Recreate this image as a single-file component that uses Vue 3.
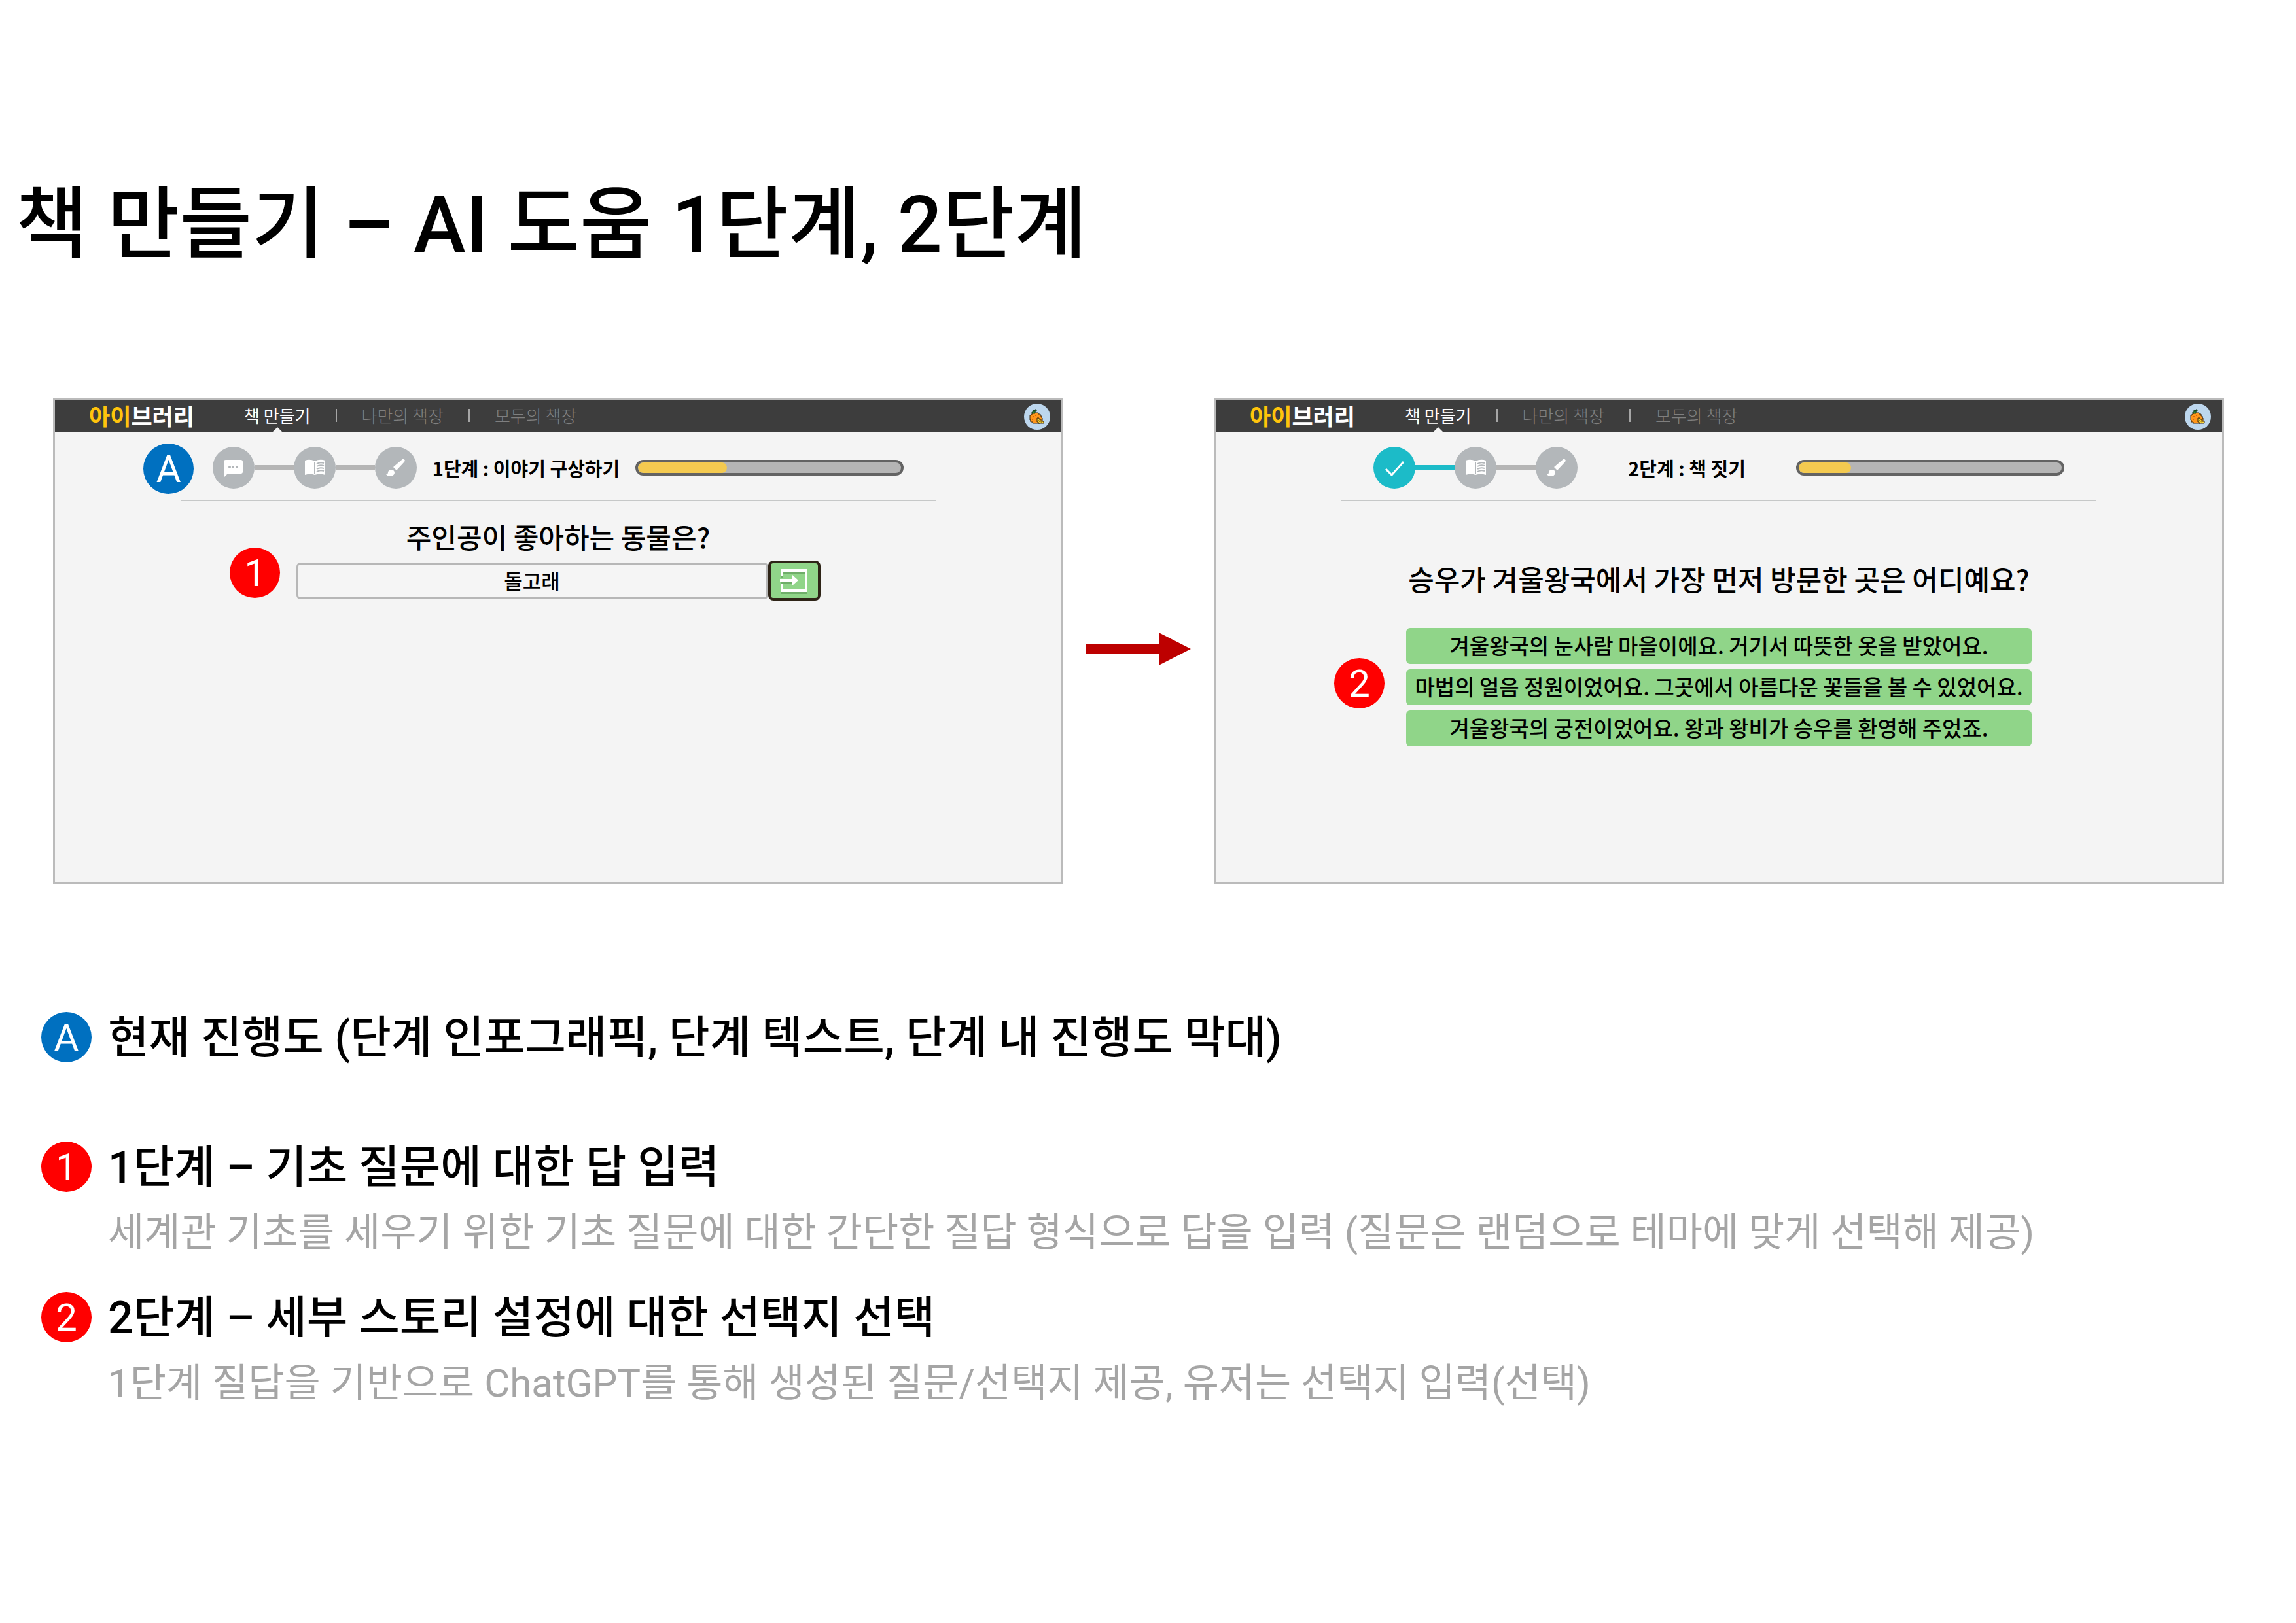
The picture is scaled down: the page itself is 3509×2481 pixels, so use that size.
<script setup>
const navItems = ['책 만들기', '나만의 책장', '모두의 책장']

const screens = [
  { id: 'idea', label: '1단계 : 이야기 구상하기', progress: 34, done: false, marker: 'A' },
  { id: 'write', label: '2단계 : 책 짓기', progress: 20, done: true, marker: '' }
]

const choices = [
  '겨울왕국의 눈사람 마을이에요. 거기서 따뜻한 옷을 받았어요.',
  '마법의 얼음 정원이었어요. 그곳에서 아름다운 꽃들을 볼 수 있었어요.',
  '겨울왕국의 궁전이었어요. 왕과 왕비가 승우를 환영해 주었죠.'
]

const notes = [
  { mark: 'A', blue: true, title: '현재 진행도 (단계 인포그래픽, 단계 텍스트, 단계 내 진행도 막대)', text: '' },
  {
    mark: '1',
    title: '1단계 – 기초 질문에 대한 답 입력',
    text: '세계관 기초를 세우기 위한 기초 질문에 대한 간단한 질답 형식으로 답을 입력 (질문은 랜덤으로 테마에 맞게 선택해 제공)'
  },
  {
    mark: '2',
    title: '2단계 – 세부 스토리 설정에 대한 선택지 선택',
    text: '1단계 질답을 기반으로 ChatGPT를 통해 생성된 질문/선택지 제공, 유저는 선택지 입력(선택)'
  }
]
</script>

<template>
  <main class="page">
    <h1>책 만들기 – AI 도움 1단계, 2단계</h1>

    <div class="flow">
      <template v-for="(screen, i) in screens" :key="screen.id">
        <svg v-if="i > 0" class="arrow" viewBox="0 0 160 50" aria-hidden="true">
          <path d="M0 17H111V0L160 25L111 50V33H0Z" fill="#bd0000" />
        </svg>

        <section class="screen">
          <header class="topbar">
            <a href="#" class="logo"><span>아이</span>브러리</a>
            <nav>
              <a v-for="(item, n) in navItems" :key="item" href="#" :class="{ current: n === 0 }">{{ item }}</a>
            </nav>
            <svg class="avatar" viewBox="0 0 40 40" role="img" aria-label="프로필">
              <circle cx="20" cy="20" r="20" fill="#bdd7ee" />
              <path d="M13 14H22V16H25V19H27V22H28V28H24V30H13V28H10V25H9V18H11V16H13Z" fill="#ff961c" stroke="#3a2408" />
              <path d="M13 20H15M12 24H14M17 18H19" stroke="#d56a08" stroke-width="2" />
              <path d="M14 10H17V15H12V13H14ZM17 9H19V12H17Z" fill="#2f8b3b" stroke="#173d1d" />
              <path d="M20 22H23V24H26V27H30V30H22V28H20Z" fill="#ffd83a" stroke="#3a2408" />
              <path d="M22 25L27 29M23 28L25 26" stroke="#a47f0b" />
            </svg>
          </header>

          <div class="content">
            <div class="status">
              <span v-if="screen.marker" class="badge blue marker-a">{{ screen.marker }}</span>
              <div class="steps">
                <svg v-if="screen.done" class="step done" viewBox="0 0 64 64" aria-label="완료">
                  <path d="M19 34L28 43L46 23" fill="none" stroke="#fff" stroke-width="3" />
                </svg>
                <svg v-else class="step" viewBox="0 0 64 64" aria-label="이야기">
                  <path d="M20 20H43Q46 20 46 23V38Q46 41 43 41H23L17 47V23Q17 20 20 20Z" fill="#fff" />
                  <g fill="#b3b7ba"><circle cx="26" cy="31" r="2" /><circle cx="31" cy="31" r="2" /><circle cx="37" cy="31" r="2" /></g>
                </svg>
                <i class="link" :class="{ done: screen.done }"></i>
                <svg class="step" viewBox="0 0 64 64" aria-label="책">
                  <path d="M17 21Q25 18 32 22Q40 18 48 21V43Q40 40 32 43Q25 40 17 43Z" fill="#fff" />
                  <path d="M32 23V41M35 26Q40 23 46 25M35 30Q40 27 46 29M35 34Q40 31 46 33M35 38Q40 35 46 37" fill="none" stroke="#b3b7ba" stroke-width="2" />
                </svg>
                <i class="link"></i>
                <svg class="step" viewBox="0 0 64 64" aria-label="그리기">
                  <path d="M44 19Q47 20 45 23L33 36L28 31L41 20Q43 18 44 19Z" fill="#fff" />
                  <path d="M24 35Q30 35 30 40Q29 45 23 45Q19 45 17 42Q20 42 20 39Q21 35 24 35Z" fill="#fff" />
                </svg>
              </div>
              <strong>{{ screen.label }}</strong>
              <div class="bar" role="progressbar" :aria-valuenow="screen.progress" :aria-label="screen.label">
                <div class="fill" :style="{ width: screen.progress + '%' }"></div>
              </div>
            </div>

            <form v-if="screen.id === 'idea'" class="ask" @submit.prevent>
              <label for="answer">주인공이 좋아하는 동물은?</label>
              <div class="entry">
                <span class="badge marker-1">1</span>
                <input id="answer" type="text" value="돌고래" />
                <button type="submit" aria-label="입력">
                  <svg viewBox="0 0 44 40" fill="none">
                    <g stroke="#6fae69" stroke-width="4"><path d="M3 16V7H40V38H3V27M1 22H22" /></g>
                    <path d="M3 13V4H40V35H3V24M0 19H20" stroke="#fff" stroke-width="4" />
                    <path d="M19 11L28 19L19 27Z" fill="#fff" />
                  </svg>
                </button>
              </div>
            </form>

            <div v-else class="pick">
              <h2>승우가 겨울왕국에서 가장 먼저 방문한 곳은 어디예요?</h2>
              <div class="choices">
                <span class="badge marker-2">2</span>
                <button v-for="choice in choices" :key="choice" type="button">{{ choice }}</button>
              </div>
            </div>
          </div>
        </section>
      </template>
    </div>

    <ul class="notes">
      <li v-for="note in notes" :key="note.mark">
        <span class="badge" :class="{ blue: note.blue }">{{ note.mark }}</span>
        <div>
          <h3>{{ note.title }}</h3>
          <p v-if="note.text">{{ note.text }}</p>
        </div>
      </li>
    </ul>
  </main>
</template>

<style>
body {
  background: #fff;
}
</style>

<style scoped>
* {
  box-sizing: border-box;
}

.page {
  padding: 272px 0 260px;
  color: #000;
  font-family: "Noto Sans CJK KR", "Noto Sans", sans-serif;
  white-space: nowrap;
}

h1,
h2,
h3,
p,
ul {
  margin: 0;
  padding: 0;
}

h1,
h3,
p,
.badge {
  font-family: Roboto, "Noto Sans CJK KR", sans-serif;
}

h1 {
  padding-left: 24px;
  font-size: 120px;
  font-weight: 500;
  line-height: 144px;
}

.flow {
  display: flex;
  align-items: center;
  gap: 35px;
  margin-top: 193px;
  padding: 0 110px 0 81px;
}

.arrow {
  flex: none;
  width: 160px;
  height: 50px;
  margin-top: 22px;
}

.screen {
  flex: 1;
  min-width: 0;
  min-height: 743px;
  border: 3px solid #bbb;
  background: #f4f4f4;
}

.topbar {
  display: flex;
  align-items: center;
  height: 49px;
  padding: 0 17px 0 52px;
  background: #3d3d3d;
}

a {
  color: #7f7f7f;
  text-decoration: none;
}

.logo {
  padding-bottom: 4px;
  color: #fff;
  font-size: 35px;
  font-weight: 700;
  line-height: 44px;
}

.logo span {
  color: #ffc40c;
}

nav {
  display: flex;
  align-items: center;
  margin-left: 76px;
  font-size: 26px;
  font-weight: 300;
  line-height: 46px;
}

nav a {
  padding-bottom: 3px;
}

nav a + a {
  display: flex;
  align-items: center;
}

nav a + a::before {
  width: 2px;
  height: 20px;
  margin: 0 38px;
  background: #a6a6a6;
  content: "";
}

nav .current {
  position: relative;
  color: #fff;
  font-weight: 400;
}

nav .current::after {
  position: absolute;
  bottom: 0;
  left: 50%;
  margin-left: -8px;
  border: 8px solid transparent;
  border-top: 0;
  border-bottom-color: #f4f4f4;
  content: "";
}

.avatar {
  width: 40px;
  height: 40px;
  margin-left: auto;
}

.content {
  width: 75%;
  margin: 0 auto;
}

.status {
  position: relative;
  display: flex;
  align-items: center;
  height: 105px;
  padding: 0 49px;
  border-bottom: 2px solid #c6c8c8;
}

.steps {
  display: flex;
  align-items: center;
  margin-top: 4px;
}

.step {
  width: 64px;
  height: 64px;
  border-radius: 50%;
  background: #b3b7ba;
}

.link {
  width: 60px;
  height: 7px;
  background: #b5b5b5;
}

.step.done,
.link.done {
  background: #1cbbc8;
}

.status strong {
  flex: 1;
  margin-top: 4px;
  font-size: 29px;
  line-height: 40px;
  text-align: center;
}

.bar {
  width: 410px;
  height: 24px;
  margin-top: 4px;
  overflow: hidden;
  border: 4px solid #636363;
  border-radius: 12px;
  background: #b5b5b5;
}

.fill {
  height: 100%;
  border-radius: 8px;
  background: #f4ca50;
}

.badge {
  display: flex;
  flex: none;
  align-items: center;
  justify-content: center;
  width: 77px;
  height: 77px;
  border-radius: 50%;
  background: #f00;
  color: #fff;
  font-size: 58px;
  line-height: 76px;
}

.blue {
  background: #0070c0;
}

.marker-a {
  position: absolute;
  top: 17px;
  left: -57px;
}

.ask label,
h2 {
  display: block;
  font-weight: 500;
  line-height: 60px;
  text-align: center;
}

.ask label {
  margin-top: 24px;
  font-size: 42px;
}

.entry {
  position: relative;
  display: flex;
  align-items: center;
  justify-content: center;
  margin-top: 7px;
}

.marker-1 {
  position: absolute;
  top: -20px;
  left: 75px;
}

input {
  width: 721px;
  height: 56px;
  padding: 0 0 3px;
  border: 3px solid #b7b7b7;
  border-radius: 6px;
  background: #f5f5f5;
  color: #000;
  font: 500 31px/40px "Noto Sans CJK KR", sans-serif;
  text-align: center;
}

.entry button {
  display: flex;
  align-items: center;
  justify-content: center;
  width: 80px;
  height: 61px;
  padding: 0;
  border: 4px solid #2e2417;
  border-radius: 8px;
  background: #90d589;
}

.entry svg {
  width: 44px;
  height: 40px;
}

h2 {
  margin-top: 88px;
  font-size: 43px;
}

.choices {
  position: relative;
  display: flex;
  flex-direction: column;
  gap: 8px;
  width: 956px;
  margin: 46px auto 0;
}

.choices button {
  height: 55px;
  padding: 0 0 3px;
  border: 0;
  border-radius: 6px;
  background: #90d589;
  color: #000;
  font: 500 33px/48px "Noto Sans CJK KR", sans-serif;
}

.marker-2 {
  position: absolute;
  top: 46px;
  left: -110px;
}

.notes {
  display: flex;
  flex-direction: column;
  margin-top: 183px;
  padding-left: 63px;
  list-style: none;
}

.notes li {
  display: flex;
  gap: 25px;
}

.notes li > div {
  padding-top: 2px;
}

.notes .badge {
  margin-top: 12px;
}

.notes li:first-child {
  margin-bottom: 96px;
}

.notes li:nth-child(2) {
  margin-bottom: 28px;
}

h3 {
  font-size: 68px;
  font-weight: 500;
  line-height: 100px;
}

.notes p {
  color: #a5a5a5;
  font-size: 60px;
  line-height: 100px;
}
</style>
